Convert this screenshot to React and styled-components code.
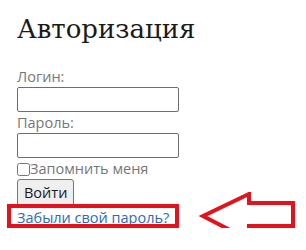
import React from 'react';
import styled, { createGlobalStyle } from 'styled-components';

const GlobalStyle = createGlobalStyle`
  html, body {
    margin: 0;
    padding: 0;
    background: #fff;
  }
`;

const Page = styled.div`
  padding: 14px 0 0 17px;
  font-family: 'Open Sans', 'Liberation Sans', sans-serif;
`;

const Title = styled.h1`
  margin: 0 0 21px;
  font-family: 'DejaVu Serif', 'Liberation Serif', serif;
  font-weight: 400;
  font-size: 26px;
  line-height: 31px;
  color: #1a1a1a;
`;

const Form = styled.form`
  display: flex;
  flex-direction: column;
  align-items: flex-start;
`;

const Label = styled.label`
  display: block;
  font-size: 14.5px;
  line-height: 21px;
  color: #777;
`;

const Input = styled.input`
  box-sizing: border-box;
  width: 162px;
  height: 25px;
  margin: 0;
  border: 1px solid #6e6e6e;
  border-radius: 2px;
  background: #fff;
`;

const CheckRow = styled.label`
  display: flex;
  align-items: center;
  margin-top: 1px;
  font-size: 14.5px;
  line-height: 20px;
  color: #777;

  input {
    width: 13px;
    height: 13px;
    margin: 0;
  }
`;

const Button = styled.button`
  margin-top: 0;
  padding: 0 6px;
  height: 27px;
  font-family: 'Open Sans', 'Liberation Sans', sans-serif;
  font-size: 14.5px;
  color: #1a1a1a;
  background: #efefef;
  border: 1px solid #767676;
  border-radius: 3px;
`;

const LinkWrap = styled.div`
  position: relative;

  /* red annotation box round the link */
  &::after {
    content: '';
    position: absolute;
    left: -10px;
    top: -2px;
    width: 172px;
    height: 24px;
    box-sizing: border-box;
    border: 4px solid #e3121c;
  }
`;

const ForgotLink = styled.a`
  font-size: 14.5px;
  line-height: 20px;
  color: #2a6db5;
  text-decoration: underline;
`;

const Arrow = styled.svg`
  position: absolute;
  left: 182px;
  top: -14px;
  width: 98px;
  height: 50px;
`;

export default function App() {
  return (
    <>
      <GlobalStyle />
      <Page>
        <Title>Авторизация</Title>
        <Form onSubmit={(e) => e.preventDefault()}>
          <Label htmlFor="login">Логин:</Label>
          <Input id="login" type="text" />
          <Label htmlFor="pass">Пароль:</Label>
          <Input id="pass" type="password" />
          <CheckRow>
            <input type="checkbox" />
            Запомнить меня
          </CheckRow>
          <Button type="submit">Войти</Button>
          <LinkWrap>
            <ForgotLink href="#">Забыли свой пароль?</ForgotLink>
            <Arrow viewBox="0 0 98 50">
              <path
                d="M4 24 L50 2 L50 11 L94 11 L94 34 L50 34 L50 48 Z"
                fill="none"
                stroke="#e3121c"
                strokeWidth="4"
                strokeLinejoin="miter"
              />
            </Arrow>
          </LinkWrap>
        </Form>
      </Page>
    </>
  );
}
